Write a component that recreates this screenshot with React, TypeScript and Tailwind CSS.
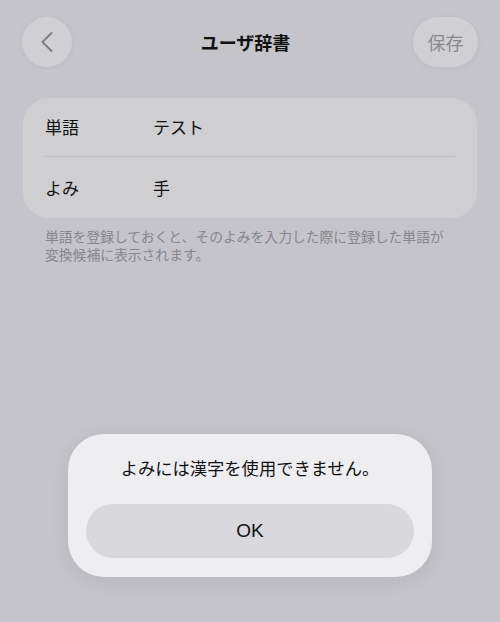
const FONT = "font-['Noto_Sans_CJK_JP','Noto_Sans',sans-serif]";

function BackIcon() {
  return (
    <svg width="14" height="22" viewBox="0 0 14 22" fill="none">
      <path d="M11.5 2 L2.5 11 L11.5 20" stroke="#7b7b80" strokeWidth="1.8" strokeLinecap="round" strokeLinejoin="round" />
    </svg>
  );
}

export default function App() {
  return (
    <div className={`relative h-[622px] w-[500px] overflow-hidden bg-[#c5c4ca] ${FONT}`}>
      {/* Header */}
      <div className="flex items-center justify-between pl-[22px] pr-[22px] pt-[17px]">
        <button className="flex h-[50px] w-[50px] items-center justify-center rounded-full bg-[#d0cfd3] shadow-[0_1px_6px_rgba(0,0,0,0.05)]">
          <BackIcon />
        </button>
        <div className="pl-[6px] text-[18px] font-bold leading-none text-[#111]">ユーザ辞書</div>
        <button className="flex h-[50px] w-[65px] items-center justify-center rounded-full bg-[#d0cfd3] text-[18px] text-[#8a8a8e] shadow-[0_1px_6px_rgba(0,0,0,0.05)]">
          保存
        </button>
      </div>

      {/* Form card */}
      <div className="mx-[23px] mt-[31px] rounded-[26px] bg-[#cfcfd1] px-[22px]">
        <div className="flex h-[59px] items-center border-b border-[#bdbdc1] text-[17px] text-[#111]">
          <span className="w-[108px]">単語</span>
          <span>テスト</span>
        </div>
        <div className="flex h-[61px] items-center text-[17px] text-[#111]">
          <span className="w-[108px]">よみ</span>
          <span>手</span>
        </div>
      </div>
      <div className="mt-[9px] flex flex-col px-[45px] text-[13.8px] leading-[18px] text-[#86868b]">
        <span>単語を登録しておくと、そのよみを入力した際に登録した単語が</span>
        <span>変換候補に表示されます。</span>
      </div>

      {/* Alert */}
      <div className="absolute left-[68px] top-[434px] flex h-[143px] w-[364px] flex-col rounded-[36px] bg-[#eeeef0] px-[18px] pb-[19px] pt-[23px] shadow-[0_4px_20px_rgba(0,0,0,0.08)]">
        <div className="text-center text-[17.3px] leading-[22px] text-[#111]">よみには漢字を使用できません。</div>
        <button className="mt-auto flex h-[54px] w-full items-center justify-center rounded-full bg-[#d9d9dd] font-['Liberation_Sans',sans-serif] text-[19px] text-[#111]">
          OK
        </button>
      </div>
    </div>
  );
}
